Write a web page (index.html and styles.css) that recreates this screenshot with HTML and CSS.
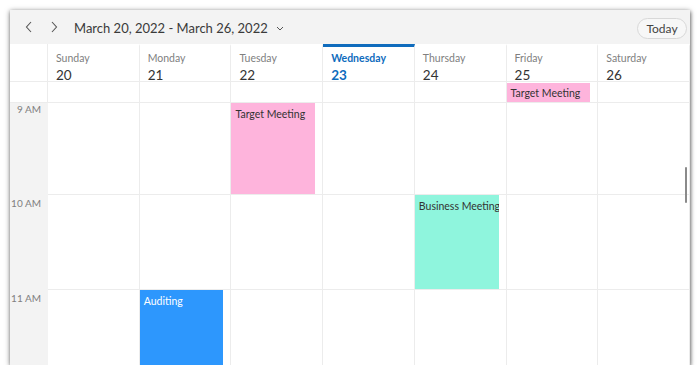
FILE: index.html
```html
<!DOCTYPE html>
<html lang="en">
<head>
    <meta charset="UTF-8">
    <title>Scheduler - Week View</title>
    <link rel="stylesheet" href="styles.css">
</head>
<body>
    <div class="scheduler">
        <div class="toolbar">
            <button class="nav-btn" aria-label="Previous">
                <svg width="8" height="12" viewBox="0 0 8 12"><path d="M6 1L1.5 6L6 11" fill="none" stroke="#555" stroke-width="1.1"/></svg>
            </button>
            <button class="nav-btn" aria-label="Next">
                <svg width="8" height="12" viewBox="0 0 8 12"><path d="M2 1L6.5 6L2 11" fill="none" stroke="#555" stroke-width="1.1"/></svg>
            </button>
            <div class="range">March 20, 2022 - March 26, 2022</div>
            <svg class="caret" width="8" height="5" viewBox="0 0 8 5"><path d="M1 1L4 4L7 1" fill="none" stroke="#555" stroke-width="1"/></svg>
            <button class="today-btn">Today</button>
        </div>

        <!-- day headers -->
        <div class="week-grid header-row">
            <div class="corner"></div>
            <div class="day"><span class="day-name">Sunday</span><span class="day-num">20</span></div>
            <div class="day"><span class="day-name">Monday</span><span class="day-num">21</span></div>
            <div class="day"><span class="day-name">Tuesday</span><span class="day-num">22</span></div>
            <div class="day today"><span class="day-name">Wednesday</span><span class="day-num">23</span></div>
            <div class="day"><span class="day-name">Thursday</span><span class="day-num">24</span></div>
            <div class="day"><span class="day-name">Friday</span><span class="day-num">25</span></div>
            <div class="day"><span class="day-name">Saturday</span><span class="day-num">26</span></div>
        </div>

        <!-- all day row -->
        <div class="week-grid allday-row">
            <div class="corner"></div>
            <div class="allday-cell"></div>
            <div class="allday-cell"></div>
            <div class="allday-cell"></div>
            <div class="allday-cell"></div>
            <div class="allday-cell"></div>
            <div class="allday-cell"><div class="appt pink allday">Target Meeting</div></div>
            <div class="allday-cell"></div>
        </div>

        <!-- hours -->
        <div class="time-area">
            <div class="week-grid hour-row first">
                <div class="time-label">9 AM</div>
                <div class="slot"></div>
                <div class="slot"></div>
                <div class="slot"><div class="appt pink">Target Meeting</div></div>
                <div class="slot"></div>
                <div class="slot"></div>
                <div class="slot"></div>
                <div class="slot"></div>
            </div>
            <div class="week-grid hour-row">
                <div class="time-label">10 AM</div>
                <div class="slot"></div>
                <div class="slot"></div>
                <div class="slot"></div>
                <div class="slot"></div>
                <div class="slot"><div class="appt mint">Business Meeting</div></div>
                <div class="slot"></div>
                <div class="slot"></div>
            </div>
            <div class="week-grid hour-row">
                <div class="time-label">11 AM</div>
                <div class="slot"></div>
                <div class="slot"><div class="appt blue">Auditing</div></div>
                <div class="slot"></div>
                <div class="slot"></div>
                <div class="slot"></div>
                <div class="slot"></div>
                <div class="slot"></div>
            </div>
            <div class="scroll-thumb"></div>
        </div>
    </div>
</body>
</html>
```

FILE: styles.css
```css
* {
    margin: 0;
    padding: 0;
    box-sizing: border-box;
}

body {
    font-family: 'Segoe UI', 'Lato', 'Noto Sans', sans-serif;
    background-color: #fff;
    color: #333;
    padding: 10px 10px 0 10px;
}

/* Scheduler card */
.scheduler {
    width: 680px;
    height: 355px;
    background-color: #fff;
    box-shadow: 0 1px 5px rgba(0, 0, 0, 0.55), 1px 2px 3px rgba(0, 0, 0, 0.25);
    display: flex;
    flex-direction: column;
    overflow: hidden;
}

/* Toolbar */
.toolbar {
    height: 34px;
    flex-shrink: 0;
    background-color: #f3f3f3;
    display: flex;
    align-items: center;
    padding-left: 6px;
    padding-right: 3px;
}

.nav-btn {
    width: 25px;
    height: 24px;
    border: none;
    background: none;
    display: flex;
    align-items: center;
    justify-content: center;
}

.range {
    font-size: 13px;
    color: #3a3a3a;
    margin-left: 8px;
    margin-top: 1px;
}

.caret {
    margin-left: 8px;
    margin-top: 2px;
}

.today-btn {
    margin-left: auto;
    width: 50px;
    height: 21px;
    border: 1px solid #d8d8d8;
    border-radius: 11px;
    background-color: #f7f7f7;
    font-family: inherit;
    font-size: 12px;
    color: #444;
    margin-top: 2px;
}

/* Shared 8 column grid */
.week-grid {
    display: grid;
    grid-template-columns: 38px repeat(7, minmax(0, 1fr));
}

.header-row {
    height: 38px;
    flex-shrink: 0;
    border-bottom: 1px solid #ececec;
}

.corner {
    border-right: 1px solid #ececec;
}

.day {
    border-right: 1px solid #ececec;
    padding: 6px 0 0 8px;
    display: flex;
    flex-direction: column;
    border-top: 2px solid transparent;
}

.day-name {
    font-size: 10.5px;
    color: #808080;
    line-height: 13px;
}

.day-num {
    font-size: 13.5px;
    color: #333;
    line-height: 18px;
    margin-top: 1px;
}

.day.today {
    border-top: 3px solid #0f6cbd;
    padding-top: 5px;
}

.day.today .day-name,
.day.today .day-num {
    color: #0f6cbd;
    font-weight: 700;
}

/* All day row */
.allday-row {
    height: 21px;
    flex-shrink: 0;
    border-bottom: 1px solid #ececec;
}

.allday-cell {
    border-right: 1px solid #ececec;
    padding-top: 1px;
}

/* Hour rows */
.time-area {
    flex: 1;
    overflow: hidden;
    position: relative;
}

.hour-row {
    height: 95px;
    border-bottom: 1px solid #ececec;
}

.hour-row.first {
    height: 92px;
}

.time-label {
    background-color: #f3f3f3;
    font-size: 10px;
    color: #808080;
    text-align: right;
    white-space: nowrap;
    padding: 2px 7px 0 0;
    line-height: 13px;
    margin-bottom: -1px;
}

.hour-row.first .time-label {
    padding-top: 0;
}

.slot {
    border-right: 1px solid #ececec;
}

/* Appointments */
.appt {
    width: calc(100% - 7px);
    height: 100%;
    font-size: 10.5px;
    padding: 3px 4px;
    color: #333;
    line-height: 14px;
    white-space: nowrap;
    overflow: hidden;
}

.appt.allday {
    height: 19px;
    padding-top: 3px;
}

.pink {
    background-color: #feb4dc;
}

.mint {
    background-color: #8ff5dd;
}

.blue {
    background-color: #2d97fd;
    color: #fff;
}

.hour-row .appt {
    padding-top: 4px;
}

/* Scrollbar thumb */
.scroll-thumb {
    position: absolute;
    right: 3px;
    top: 64px;
    width: 2px;
    height: 36px;
    border-radius: 1px;
    background-color: #8a8a8a;
}
```
